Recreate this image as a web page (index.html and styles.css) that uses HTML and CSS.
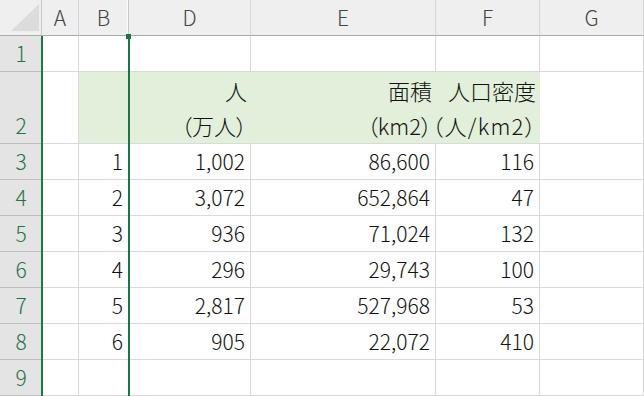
FILE: index.html
```html
<!DOCTYPE html>
<html lang="ja">
<head>
<meta charset="utf-8">
<link rel="stylesheet" href="styles.css">
</head>
<body>
<div class="sheet">
  <div class="corner"><svg width="42" height="36" viewBox="0 0 42 36"><polygon points="39,4 39,31 11,31" fill="#dcdcdc"/></svg></div>
  <div class="ch">A</div>
  <div class="ch chb">B</div>
  <div class="ch">D</div>
  <div class="ch">E</div>
  <div class="ch">F</div>
  <div class="ch">G</div>

  <div class="rh">1</div>
  <div class="c"></div><div class="c"></div><div class="c"></div><div class="c"></div><div class="c"></div><div class="c"></div>

  <div class="rh rh2"><span>2</span></div>
  <div class="c"></div>
  <div class="c fill"></div>
  <div class="c fill two"><span>人</span><span><i>（</i>万人<i>）</i></span></div>
  <div class="c fill two"><span>面積</span><span><i>（</i>km2<i>）</i></span></div>
  <div class="c fill two"><span>人口密度</span><span class="wide"><i>（</i>人/km2<i>）</i></span></div>
  <div class="c"></div>

  <div class="rh">3</div>
  <div class="c"></div><div class="c">1</div><div class="c">1,002</div><div class="c">86,600</div><div class="c">116</div><div class="c"></div>
  <div class="rh">4</div>
  <div class="c"></div><div class="c">2</div><div class="c">3,072</div><div class="c">652,864</div><div class="c">47</div><div class="c"></div>
  <div class="rh">5</div>
  <div class="c"></div><div class="c">3</div><div class="c">936</div><div class="c">71,024</div><div class="c">132</div><div class="c"></div>
  <div class="rh">6</div>
  <div class="c"></div><div class="c">4</div><div class="c">296</div><div class="c">29,743</div><div class="c">100</div><div class="c"></div>
  <div class="rh">7</div>
  <div class="c"></div><div class="c">5</div><div class="c">2,817</div><div class="c">527,968</div><div class="c">53</div><div class="c"></div>
  <div class="rh">8</div>
  <div class="c"></div><div class="c">6</div><div class="c">905</div><div class="c">22,072</div><div class="c">410</div><div class="c"></div>
  <div class="rh">9</div>
  <div class="c"></div><div class="c"></div><div class="c"></div><div class="c"></div><div class="c"></div><div class="c"></div>

  <div class="sel sel-a"></div>
  <div class="sel sel-c"></div>
  <div class="handle"></div>
</div>
</body>
</html>
```

FILE: styles.css
```css
html, body {
  margin: 0;
  padding: 0;
  background: #ffffff;
}
.sheet {
  position: relative;
  width: 644px;
  height: 396px;
  overflow: hidden;
  display: grid;
  grid-template-columns: 42px 37px 50px 122px 185px 104px 104px;
  grid-template-rows: 36px 36px 72px repeat(7, 36px);
  font-family: "Noto Sans CJK JP", "Noto Sans", sans-serif;
  font-weight: 300;
}
.sheet > div {
  box-sizing: border-box;
}
.corner {
  background: #efefef;
  border-right: 1px solid #c8c8c8;
  border-bottom: 1px solid #ababab;
}
.corner svg {
  display: block;
}
.ch {
  background: #efefef;
  border-right: 1px solid #d6d6d6;
  border-bottom: 1px solid #ababab;
  color: #444444;
  font-size: 21px;
  display: flex;
  align-items: center;
  justify-content: center;
  line-height: 1;
  padding-bottom: 1px;
}
.chb {
  border-right: 1px solid #c8c8c8;
  box-shadow: inset -1px 0 0 #fafafa;
}
.rh {
  background: #e4e4e4;
  border-bottom: 1px solid #bdbdbd;
  color: #217346;
  font-size: 21px;
  display: flex;
  align-items: center;
  justify-content: center;
  line-height: 1;
}
.rh2 {
  flex-direction: column;
  justify-content: flex-end;
}
.rh2 span {
  height: 35px;
  display: flex;
  align-items: center;
}
.c {
  border-right: 1px solid #dadada;
  border-bottom: 1px solid #dadada;
  color: #111111;
  font-size: 21px;
  display: flex;
  align-items: center;
  justify-content: flex-end;
  padding-right: 5px;
  line-height: 1;
  white-space: nowrap;
}
.fill {
  background: #e2efda;
  border-right-color: #e2efda;
}
.two {
  flex-direction: column;
  justify-content: flex-end;
  align-items: flex-end;
  font-size: 22px;
  padding-right: 3px;
}
.two span {
  height: 36px;
  display: flex;
  align-items: center;
}
.two .wide {
  letter-spacing: 1.3px;
  margin-right: -1px;
}
.two i {
  font-style: normal;
  font-feature-settings: "palt" 1;
}
.sel {
  position: absolute;
  background: #217346;
  width: 2px;
  top: 36px;
  bottom: 0;
}
.sel-a {
  left: 41px;
}
.sel-c {
  left: 128px;
  top: 38px;
}
.handle {
  position: absolute;
  left: 126px;
  top: 34px;
  width: 5px;
  height: 5px;
  background: #217346;
}
```
